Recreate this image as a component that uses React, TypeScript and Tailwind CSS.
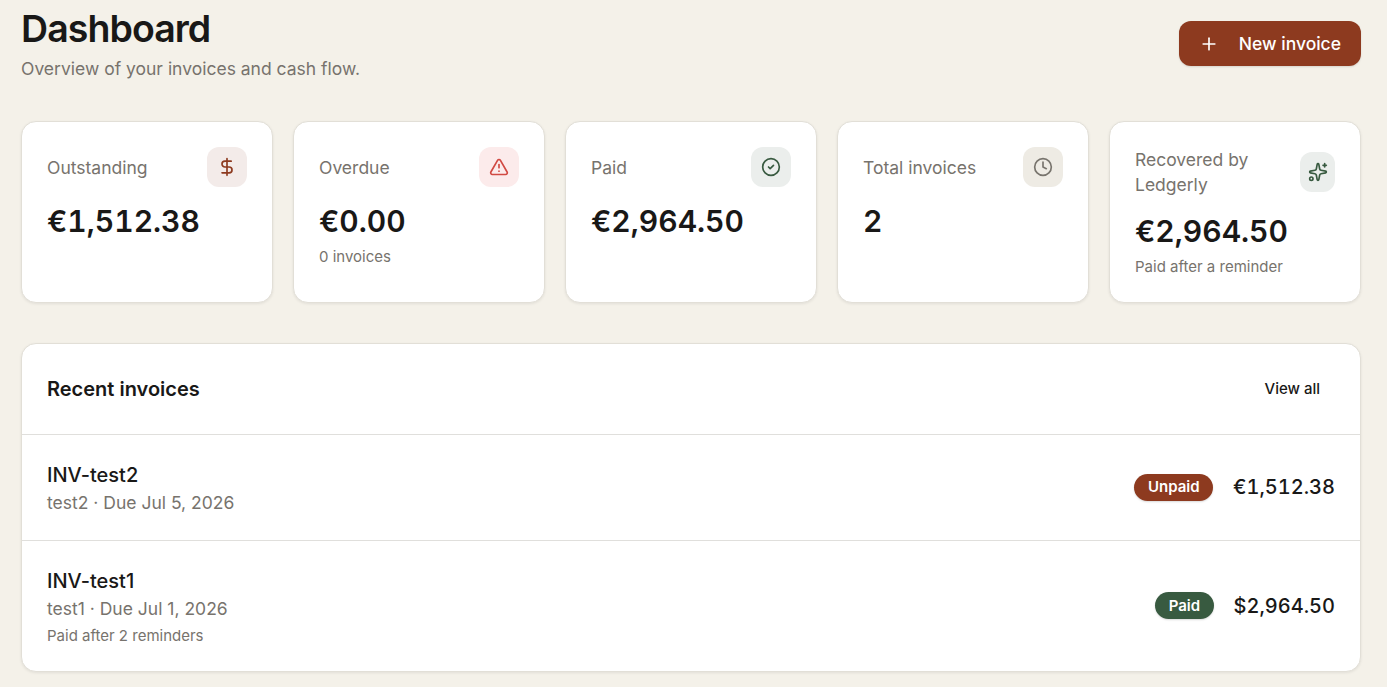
// Dashboard.tsx: invoice overview with headline stats and the latest invoices.

import { CircleCheck, Clock, DollarSign, Plus, Sparkles, TriangleAlert } from "lucide-react";
import type { LucideIcon } from "lucide-react";

interface Stat {
  label: string;
  value: string;
  hint?: string;
  icon: LucideIcon;
  tone: string;
}

interface Invoice {
  number: string;
  client: string;
  due: string;
  note?: string;
  status: "Unpaid" | "Paid";
  amount: string;
}

const stats: Stat[] = [
  { label: "Outstanding", value: "€1,512.38", icon: DollarSign, tone: "bg-[#f3ebe9] text-[#8d3a1f]" },
  { label: "Overdue", value: "€0.00", hint: "0 invoices", icon: TriangleAlert, tone: "bg-[#fcebeb] text-[#d14a43]" },
  { label: "Paid", value: "€2,964.50", icon: CircleCheck, tone: "bg-[#ebeeec] text-[#385a40]" },
  { label: "Total invoices", value: "2", icon: Clock, tone: "bg-[#eeebe4] text-[#78746d]" },
  {
    label: "Recovered by Ledgerly",
    value: "€2,964.50",
    hint: "Paid after a reminder",
    icon: Sparkles,
    tone: "bg-[#ebeeec] text-[#385a40]",
  },
];

const invoices: Invoice[] = [
  { number: "INV-test2", client: "test2", due: "Jul 5, 2026", status: "Unpaid", amount: "€1,512.38" },
  {
    number: "INV-test1",
    client: "test1",
    due: "Jul 1, 2026",
    note: "Paid after 2 reminders",
    status: "Paid",
    amount: "$2,964.50",
  },
];

function StatCard({ label, value, hint, icon: Icon, tone }: Stat) {
  return (
    <div className="rounded-[15px] border border-[#e2dfd7] bg-white p-[25px] shadow-[0_1px_3px_rgba(0,0,0,0.08)]">
      <div className="flex items-center justify-between">
        <p className="text-[17.5px] leading-[25px] text-[#77736d]">{label}</p>
        <div className={`flex h-10 w-10 items-center justify-center rounded-[12px] ${tone}`}>
          <Icon size={20} strokeWidth={2} className="shrink-0" />
        </div>
      </div>
      <p className="mt-[14px] text-[30px] leading-10 font-semibold tabular-nums text-[#191817]">{value}</p>
      {hint && <p className="mt-[6px] text-[15px] leading-5 text-[#77736d]">{hint}</p>}
    </div>
  );
}

function StatusBadge({ status }: { status: Invoice["status"] }) {
  const tone = status === "Paid" ? "bg-[#385a40]" : "bg-[#8d3a1f]";
  return (
    <span
      className={`rounded-full px-[13.5px] py-[3.5px] text-[15px] leading-5 font-semibold text-white shadow-[0_1px_2px_rgba(0,0,0,0.15)] ${tone}`}
    >
      {status}
    </span>
  );
}

export default function App() {
  return (
    <main className="h-[687px] overflow-hidden bg-[#f4f1e9] pt-[6px] pr-[26px] pl-[21px] font-[Inter,sans-serif] text-[#191817]">
      <header className="flex items-center justify-between">
        <div>
          <h1 className="text-[37.5px] leading-[45px] font-semibold tracking-tight">Dashboard</h1>
          <p className="mt-[5px] text-[17.5px] leading-[25px] text-[#77736d]">
            Overview of your invoices and cash flow.
          </p>
        </div>
        <button className="flex h-[45px] items-center gap-5 rounded-[12px] bg-[#8d3a1f] px-5 text-[17.5px] font-medium text-white shadow-[0_1px_2px_rgba(0,0,0,0.12)]">
          <Plus size={20} />
          <span className="pt-0.5">New invoice</span>
        </button>
      </header>

      <section className="mt-10 grid grid-cols-5 gap-5">
        {stats.map((stat) => (
          <StatCard key={stat.label} {...stat} />
        ))}
      </section>

      <section className="mt-10 rounded-[15px] border border-[#e2dfd7] bg-white shadow-[0_1px_3px_rgba(0,0,0,0.08)]">
        <div className="flex items-center justify-between p-[25px]">
          <h2 className="text-xl font-semibold">Recent invoices</h2>
          <button className="h-10 px-[15px] text-[15px] font-medium">View all</button>
        </div>
        {invoices.map((inv) => (
          <div key={inv.number} className="flex items-center justify-between border-t border-[#e0dfdc] p-[25px]">
            <div>
              <p className="text-xl leading-[30px] font-medium">{inv.number}</p>
              <p className="text-[17.5px] leading-[25px] text-[#77736d]">
                {inv.client} · Due {inv.due}
              </p>
              {inv.note && <p className="mt-[5px] text-[15px] leading-5 text-[#77736d]">{inv.note}</p>}
            </div>
            <div className="flex items-center gap-5 pb-[0.5px]">
              <StatusBadge status={inv.status} />
              <span className="pt-[0.5px] text-xl leading-[29px] font-medium tabular-nums">{inv.amount}</span>
            </div>
          </div>
        ))}
      </section>
    </main>
  );
}
